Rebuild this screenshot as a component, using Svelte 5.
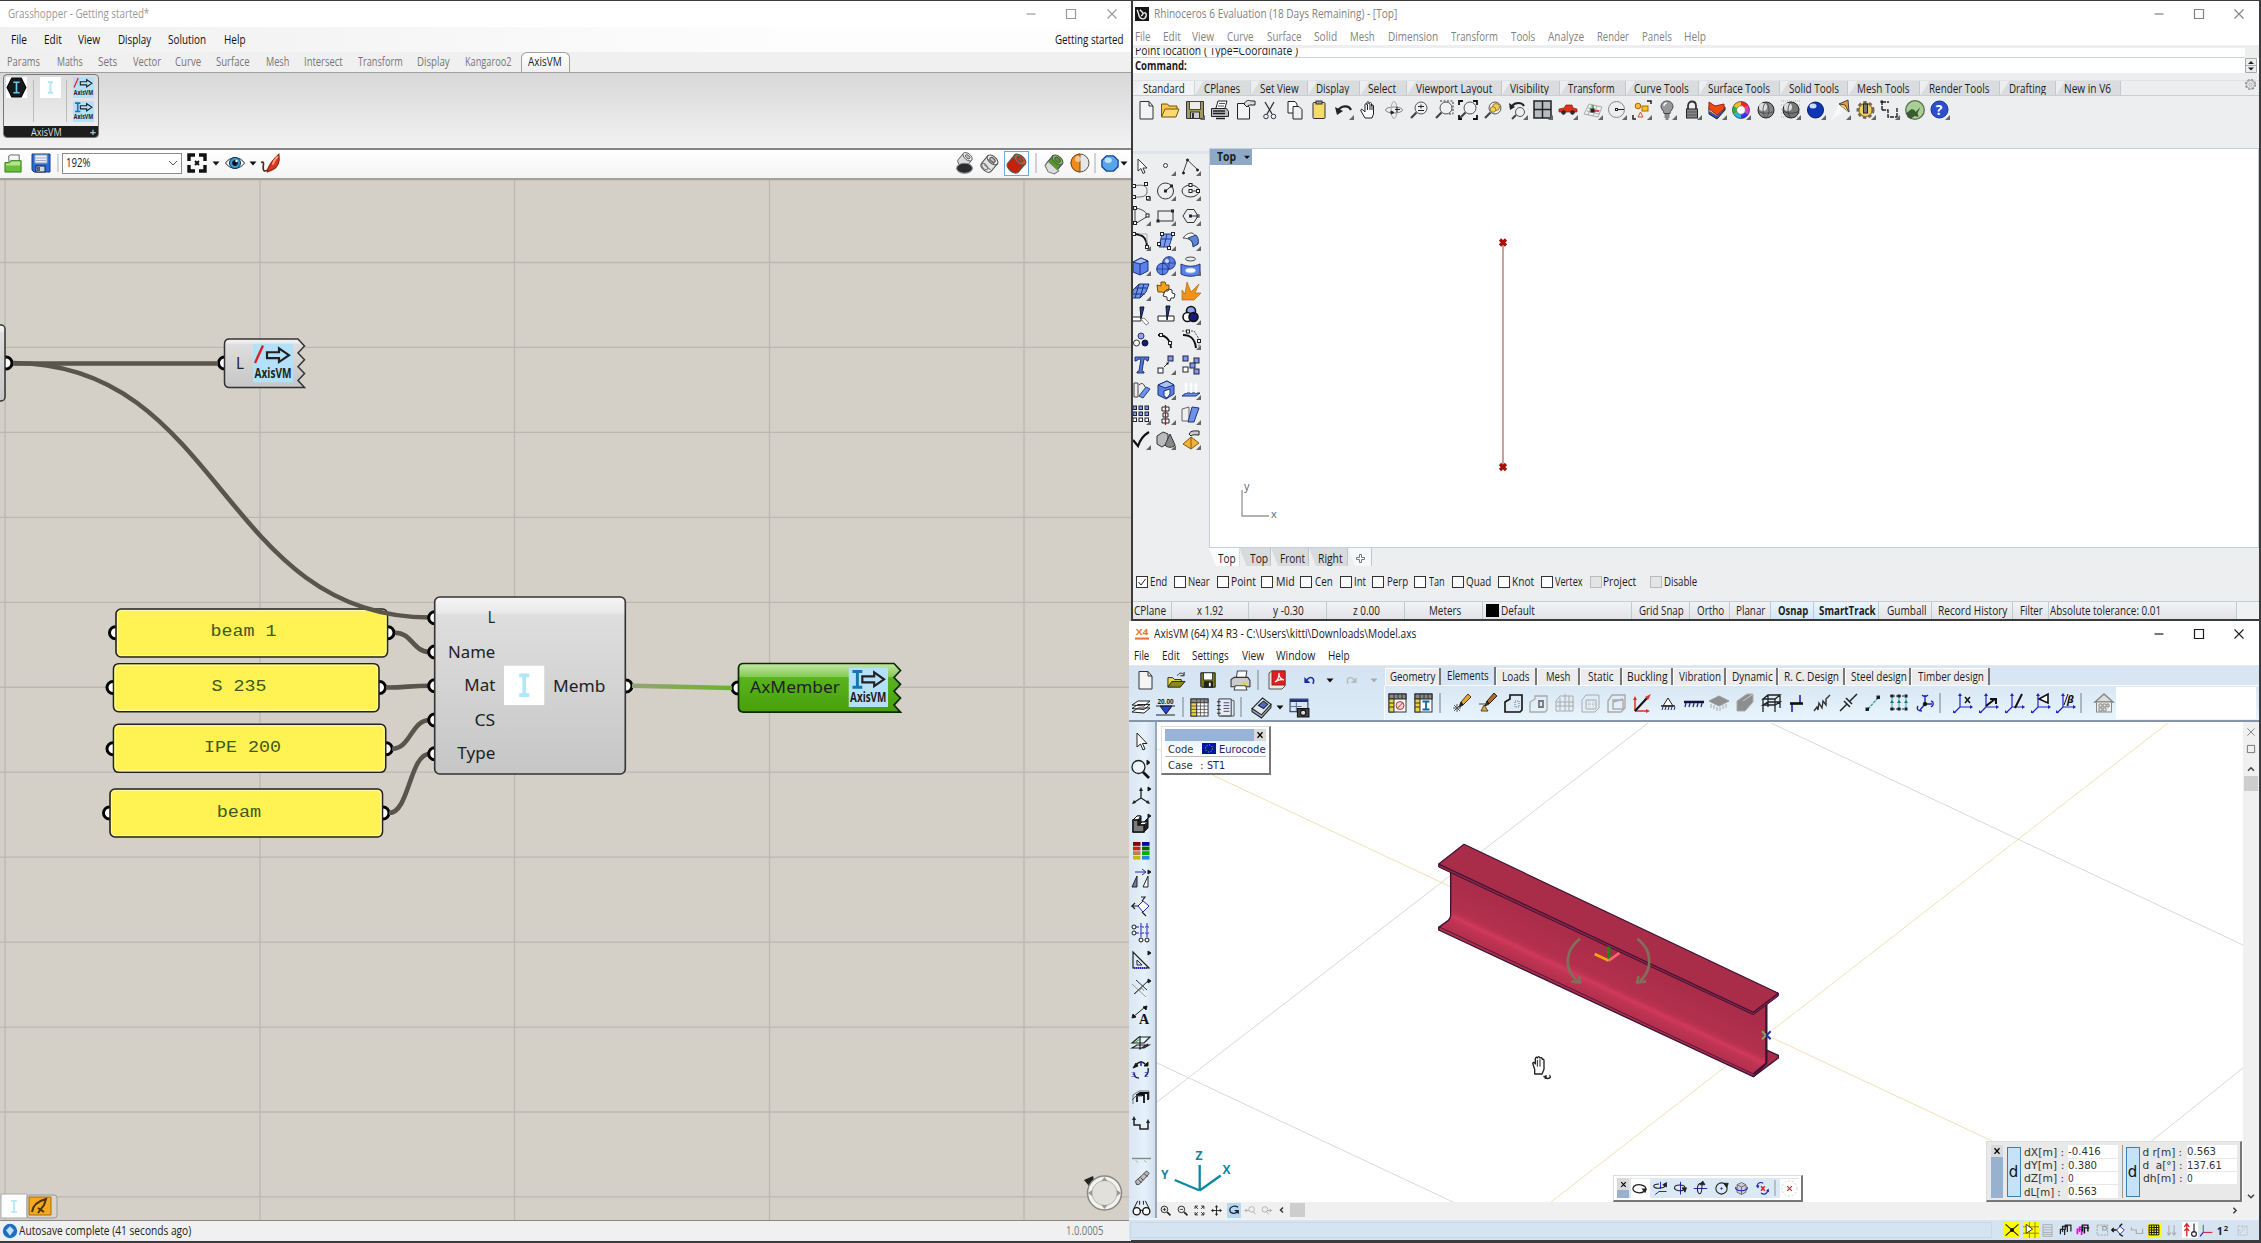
<script>
  // Squeezes a label horizontally to the width its slot reserves.
  function fit(node, w) {
    const n = node.offsetWidth;
    if (n) node.style.transform = `scaleX(${w / n})`;
  }

  // Turns absolute positions in a strip into gaps between neighbours.
  function place(items, x0) {
    let p = x0;
    return items.map(([k, v, x, w = 20, c = '']) => {
      const left = k === 'i' ? x - w / 2 : x;
      const g = left - p;
      p = left + w;
      return { k, v, w, g, c };
    });
  }

  function cellsOf(items, x0) {
    let p = x0;
    return items.map(([t, x, w, end, c = '']) => {
      const r = { t, w, pad: x - p, width: end - p, c };
      p = end;
      return r;
    });
  }

  const tri = '<path d="M20 15v5h-5z" fill="#666" stroke="none"/>';
  const mag = '<circle cx="12" cy="8" r="6" fill="#eef2f5" stroke="#555"/><path d="M7.500 12.500L2 18" stroke-width="2.200" stroke="#444"/>';
  const ucs = '<path d="M7 1v13h12M7 14l-6 6" stroke="#22c" stroke-width="1.200"/><path d="M5 3l2-3 2 3zM17 12l3 2-3 2zM0 17v3h3z" fill="#22c" stroke="none"/>';
  const cylB = (a, b) => `<g transform="rotate(40 10 10)"><path d="M4 5.500v9c0 5 12 5 12 0v-9z" fill="${a}" stroke="#555"/><ellipse cx="10" cy="5.500" rx="6" ry="3.500" fill="${b}" stroke="#555"/><ellipse cx="10" cy="5.500" rx="3" ry="1.700" fill="#0003" stroke="#555"/></g>`;
  const ax = (f) => `<rect width="20" height="20" fill="#b3e0fa" stroke="none"/>${f}<path d="M7 4.500h6V2.500l5 3.500-5 3.500v-2H7z" fill="#b3e0fa" stroke="#222" stroke-width="1.100"/><text x="0.800" y="17.600" font-size="7" textLength="18.400" lengthAdjust="spacingAndGlyphs" fill="#222" stroke="none" font-weight="bold">AxisVM</text>`;
  const ib = (c) => `<path d="M2 2h5M4.500 2v8M2 10h5" stroke="${c}" stroke-width="1.500"/>`;
  const node = (x, y) => `<rect x="${x - 1.5}" y="${y - 1.5}" width="3" height="3" fill="#fff" stroke="#222"/>`;
  const sq = (x, y, f, s = 5) => `<rect x="${x}" y="${y}" width="${s}" height="${s}" fill="${f}" stroke="#223"/>`;

  const icons = {
    sep: '<path d="M10 0v20" stroke="#9aa3ad" stroke-width="1.500"/>',
    dd: '<path d="M6.500 8.500h7L10 12.500z" fill="#111" stroke="none"/>',
    ddg: '<path d="M6.500 8.500h7L10 12.500z" fill="#aaa" stroke="none"/>',
    ddl: '<path d="M4 7.500h12L10 14z" fill="#111" stroke="none"/>',
    min: '<path d="M5.500 10h9" stroke-width="1.200"/>',
    max: '<path d="M5.500 5.500h9v9h-9z" stroke-width="1.200"/>',
    close: '<path d="M5.500 5.500l9 9M14.500 5.500l-9 9" stroke-width="1.100"/>',
    closeb: '<path d="M5 4.500l10 11M15 4.500l-10 11" stroke-width="2.400"/>',
    // Grasshopper
    hex: '<rect width="20" height="20" fill="#fff" stroke="none"/><path d="M5.500 1h9L19 10l-4.500 9h-9L1 10z" fill="#171a1c" stroke="#000"/><path d="M7 5h6M10 5v10M7 15h6" stroke="#6cc7ee" stroke-width="1.600"/>',
    ibeam: '<rect width="20" height="20" fill="#fff" stroke="none"/><path d="M7.500 5h5M10 5v10M7.500 15h5" stroke="#aee6fb" stroke-width="1.800"/>',
    axl: ax('<path d="M1 10L5 1" stroke="#d22" stroke-width="1.200"/>'),
    axi: ax(ib('#1577ad')),
    folder: '<path d="M5 8V2l2-1h9v8" fill="#f5f5f5" stroke="#666"/><path d="M1 9h4l2-2h11v12H1z" fill="#6abf3b" stroke="#2e7d1a"/><path d="M2 10h4l2-2h9v4H2z" fill="#b5e48c" stroke="none"/>',
    floppy: '<path d="M1 1h18v18H3l-2-2z" fill="#2c6bd6" stroke="#163a86"/><rect x="4" y="2" width="12" height="8" fill="#e8f0f5" stroke="#9ab"/><path d="M5 5h10M5 7.500h10" stroke="#aab"/><rect x="5" y="13" width="9" height="6" fill="#cfd6e2" stroke="#124"/><rect x="6" y="14" width="3" height="4" fill="#124a" stroke="none"/>',
    focus: '<path d="M2 8V2h6M12 2h6v6M18 12v6h-6M8 18H2v-6" stroke="#111" stroke-width="3.400"/><path d="M8 8l4 4M12 8l-4 4" stroke="#111" stroke-width="2"/>',
    eye: '<path d="M0.500 10C5 3 15 3 19.500 10 15 17 5 17 0.500 10z" fill="#fff" stroke="#223"/><circle cx="10" cy="10" r="5.500" fill="#3a9ddb" stroke="#135"/><circle cx="10" cy="10" r="2.500" fill="#012"/><circle cx="11.500" cy="8" r="1.200" fill="#fff" stroke="none"/>',
    brush: '<path d="M1 9c5-2 0 6 3 8 3 1 4-2 6-3" stroke="#5a2a1a" stroke-width="1.600"/><path d="M7 18c0-4 5-12 11-17 1 6 0 12-6 15z" fill="#d9381e" stroke="#8a2210"/><path d="M12 11c1-3 3-6 5-8" stroke="#ff9a7a" stroke-width="2"/>',
    dome: '<g transform="translate(2,-2) scale(.85)">' + cylB('#ddd', '#f5f5f5') + '</g><ellipse cx="10" cy="14.500" rx="7.500" ry="4.800" fill="#2a2d2f" stroke="#888"/>',
    wirec: cylB('#e4e4e4', '#f2f2f2') + '<path d="M5 11l6 5M9 6l6 5" stroke="#777"/><ellipse cx="5.500" cy="13" rx="2" ry="3.500" transform="rotate(-40 5.500 13)" stroke="#777"/>',
    redc: cylB('#c8200a', '#e64a2a'),
    greenc: cylB('#4f9e1c', '#74c43c') + '<path d="M1 12l3-4 10 9-4 3-6-2z" fill="#ddd" stroke="#777"/>',
    half: '<circle cx="10" cy="10" r="9" fill="#e6e6e6" stroke="#555"/><path d="M10 1a9 9 0 0 0 0 18z" fill="#ee8b1c" stroke="#874a06"/><ellipse cx="8" cy="6" rx="3" ry="3" fill="#fff8" stroke="none"/>',
    gem: '<path d="M6 2h8l5 5v7l-5 5H6l-5-5V7z" fill="#5aa5ea" stroke="#174a99" stroke-width="1.500"/><ellipse cx="8" cy="7" rx="4" ry="3" fill="#bfe0ff" stroke="none"/>',
    // Rhino toolbar
    rlogo: '<rect width="20" height="20" fill="#151515" stroke="none"/><path d="M3 4c3 5 1 8 5 12 3 2 8 1 8-4M7 4l5 5-3 4M13 8c4 0 4 6 1 7" stroke="#eee" stroke-width="2"/>',
    new: '<path d="M4 1.500h9l4 4.500v13H4z" fill="#f4f4f4" stroke="#333"/><path d="M13 1.500V6h4" stroke="#333"/>',
    open: '<path d="M1.500 17V4h6l1.500 2h8v3" fill="#f5c64f" stroke="#7a5200"/><path d="M1.500 17L5 9h14l-3 8z" fill="#ffd873" stroke="#7a5200"/>',
    rsave: '<path d="M1.500 1.500h17v17h-17z" fill="#a29b57" stroke="#333"/><rect x="4.500" y="1.500" width="11" height="8" fill="#eee" stroke="#444"/><rect x="5.500" y="12" width="9" height="6.500" fill="#ccc" stroke="#333"/><path d="M8 13v5" stroke="#333" stroke-width="2"/>' + tri,
    print: '<path d="M6 8l2-7h9l-2 7" fill="#fff" stroke="#222"/><path d="M1.500 8.500h15l2 3v5h-17z" fill="#bbb" stroke="#222"/><path d="M3 11h12M3 13.500h12M6 18.500h9" stroke="#222" stroke-width="1.400"/><path d="M9 3.500h6M8 6h6" stroke="#555"/>',
    props: '<path d="M2.500 3.500h8l4 4v11.500h-12z" fill="#f4f4f4" stroke="#222"/><path d="M9 4c2-4 5-4 7-3h4v4h-3c-3 0-4 0-5 2z" fill="#ddd" stroke="#222"/>',
    cut: '<path d="M5 2l7 12M14 2L7 14" stroke="#333" stroke-width="1.300"/><circle cx="6" cy="16.500" r="2.300" stroke="#335"/><circle cx="13.500" cy="16.500" r="2.300" stroke="#335"/>',
    copy: '<path d="M3 1.500h7l2 2.500v9H3z" fill="#fff" stroke="#222"/><path d="M8 6.500h6l3 3V19H8z" fill="#f1f1f1" stroke="#222"/>',
    paste: '<rect x="4" y="2.500" width="12" height="16" rx="1" fill="#f5dc6a" stroke="#333"/><rect x="7" y="1" width="6" height="3" fill="#999" stroke="#333"/>',
    undo: '<path d="M4 11c3-6 11-6 13-1" stroke="#222" stroke-width="2.200"/><path d="M1 7l2 8 6-4z" fill="#222" stroke="none"/>' + tri,
    hand: '<path d="M6 18l-4-7c-1-2 1-2 2-1l2 2V5c0-2 2-2 2 0V3c0-2 2-2 2 0v1c0-2 2.500-2 2.500 0v2c0-1.500 2-1.500 2 0v8l-1.500 4z" fill="#fff" stroke="#222"/><path d="M8.500 5v5M11 4v6M13 5v5" stroke="#222"/>',
    rot: '<ellipse cx="10" cy="10" rx="8.500" ry="3" stroke="#888"/><ellipse cx="10" cy="10" rx="3" ry="8.500" stroke="#aaa"/><path d="M7 11l3 1.500-3 1.500z" fill="#222" stroke="#222"/><path d="M13 6.500v6M11 9.500h5" stroke="#222"/>',
    zoom: mag + '<path d="M9 6.500h6M12 4.500v4M9 10.500h6" stroke="#222"/>',
    zwin: mag + '<path d="M6 1h13v13h-5" stroke="#333" stroke-dasharray="2 1.500"/>',
    zext: mag + '<path d="M1 5V1h4M15 1h4v4M19 15v4h-4M1 15v4h3" stroke="#111" stroke-width="1.800"/>',
    zsel: mag + '<circle cx="13" cy="7" r="3.500" fill="#f6d13c" stroke="#975"/><circle cx="10" cy="9.500" r="2.800" fill="#f6d13c" stroke="#975"/>',
    zundo: '<circle cx="12" cy="12" r="4.500" stroke="#555"/><path d="M8 15l-4 4" stroke-width="2" stroke="#444"/><path d="M4 6c3-4 10-4 12 0" stroke="#222" stroke-width="2"/><path d="M1 3l1 7 5-3z" fill="#222" stroke="none"/>' + tri,
    view4: '<path d="M1 1h17v17H1zM9.500 1v17M1 9.500h17" fill="#b8bcc0" stroke="#222" stroke-width="1.500"/>' + tri,
    car: '<path d="M1 12v-3l5-1 2-3h6l1 3 4 1v3z" fill="#e03018" stroke="#8a1a0c" stroke-width=".7"/><circle cx="5.500" cy="12.500" r="1.800" fill="#333"/><circle cx="14.500" cy="12.500" r="1.800" fill="#333"/>' + tri,
    cpl: '<path d="M1 14L6 4l13 3-4 10zM4 11l12 3M5 8l12 3M9 5l-4 10M14 6l-4 10" stroke="#aaa"/><path d="M10 11V5" stroke="#2a2" stroke-width="1.500"/><path d="M10 11h6" stroke="#d22" stroke-width="1.500"/>' + sq(8, 9, '#222', 3) + tri,
    circ: '<circle cx="9.500" cy="9.500" r="8" stroke="#888"/><path d="M10 9.500h7" stroke="#222"/>' + sq(8.500, 8.500, '#fff', 2) + tri,
    objs: '<path d="M1 15v4h3M15 1h4v3" stroke="#222" stroke-width="1.500"/><circle cx="6" cy="6" r="2.800" fill="#fb3" stroke="#a60"/><rect x="10" y="6" width="6" height="5" fill="#ffc11a" stroke="#a60"/><path d="M6 17l2.500-5 2.500 5z" stroke="#c52"/>' + tri,
    bulb: '<path d="M10 1c4 0 6 3 6 5.500 0 3-3 4-3 7H7c0-3-3-4-3-7C4 4 6 1 10 1z" fill="#999" stroke="#444"/><path d="M7.500 15h5M7.500 17h5M8.500 19h3" stroke="#222"/><path d="M7 6c0-2 1-3 3-3" stroke="#eee" stroke-width="1.500"/>' + tri,
    lock: '<path d="M6 9V6c0-6 8-6 8 0v3" stroke="#333" stroke-width="1.800"/><rect x="4.500" y="9" width="11" height="9" fill="#888" stroke="#222"/><path d="M5 12h10M5 15h10" stroke="#555"/>' + tri,
    layers: '<path d="M2 8v6l8 5 8-9V7z" fill="#2b4fc0" stroke="#222"/><path d="M2 6v5l8 5 8-9z" fill="#fff" stroke="#666"/><path d="M2 2l6 4 9-2v5l-7 6-8-6z" fill="#ee4a10" stroke="#922"/>' + tri,
    color: '<g stroke-width="4"><path d="M10 3.500a6.500 6.500 0 0 1 5.600 3.200" stroke="#f22"/><path d="M15.600 6.700a6.500 6.500 0 0 1 0 6.600" stroke="#d3c"/><path d="M15.600 13.300A6.500 6.500 0 0 1 10 16.500" stroke="#33f"/><path d="M10 16.500a6.500 6.500 0 0 1-5.600-3.200" stroke="#2bd"/><path d="M4.400 13.300a6.500 6.500 0 0 1 0-6.600" stroke="#2b3"/><path d="M4.400 6.700A6.500 6.500 0 0 1 10 3.500" stroke="#fb2"/></g><circle cx="10" cy="10" r="8.500" stroke="#333" stroke-width=".7"/><circle cx="10" cy="10" r="4.300" fill="#fff" stroke="#555" stroke-width=".7"/>' + tri,
    ball: '<circle cx="10" cy="10" r="8" fill="#888" stroke="#222"/><circle cx="7" cy="7" r="4" fill="#ddd" stroke="none"/><path d="M10 2c-4 4-4 12 0 16M2 11c5 3 11 3 16 0M10 2c4 4 4 12 0 16" stroke="#444" stroke-width=".8"/>',
    ball2: '<path d="M0 1h20M0 5h20M0 9h20M0 13h20M0 17h20" stroke="#aaa" stroke-dasharray="1 1"/><circle cx="10" cy="10" r="8" fill="#777" stroke="#222"/><circle cx="7" cy="7" r="4" fill="#ddd" stroke="none"/><path d="M10 2c-4 4-4 12 0 16M2 11c5 3 11 3 16 0" stroke="#333" stroke-width=".8"/>' + tri,
    blue: '<circle cx="9.500" cy="10" r="8" fill="#0c37b5" stroke="#061c66"/><ellipse cx="7" cy="6" rx="3.500" ry="2.500" fill="#cfdcff" stroke="none"/>' + tri,
    spot: '<path d="M8 4l9-4 1 12z" fill="#f09a20" stroke="#444"/><path d="M8 4l6 1 4 7" fill="#ffd27a" stroke="#444"/><path d="M0 20L8 5l6 6z" fill="#fff9" stroke="none"/>' + tri,
    gear: '<circle cx="9.500" cy="10" r="7.500" fill="#e6b53a" stroke="#765" stroke-width="3" stroke-dasharray="3.200 2.300"/><circle cx="9.500" cy="10" r="6.500" fill="#f2cf5b" stroke="#765"/><rect x="7.500" y="4" width="4" height="9" fill="#777" stroke="#222"/>' + tri,
    dim: '<path d="M2 2h7M2 1v9M2 10h6v7h9M17 8v9M10 17h7" stroke="#222" stroke-width="1.400" stroke-dasharray="4 1"/>' + sq(1, 1, '#222', 1.500) + tri,
    rh: '<circle cx="10" cy="10" r="9.300" fill="#a9cf95" stroke="#5a6e52" stroke-width="1.300"/><path d="M1.500 13l5-4 3 1 1 2 5-5-3 6 1 4-4-1-4 3-3-2z" fill="#3a5a34" stroke="none"/>',
    help: '<circle cx="9.500" cy="9.500" r="8.500" fill="#2b50cf" stroke="#14308c"/><text x="5.800" y="14.500" font-size="14" font-weight="bold" fill="#fff" stroke="none">?</text>' + tri,
    cog: '<circle cx="10" cy="10" r="7.500" stroke="#888" stroke-width="2" stroke-dasharray="3.500 2.400"/><circle cx="10" cy="10" r="6" stroke="#888"/><circle cx="10" cy="10" r="2.500" stroke="#888"/>',
    // Rhino side palette
    arrow: '<path d="M7 3v12l3-2.500 2 5 2-1-2-4.500h4z" fill="#fff" stroke="#333"/>',
    point: '<circle cx="9.500" cy="9.500" r="2" fill="#fff" stroke="#333"/>' + tri,
    poly: '<path d="M2 17L6.500 4 17 14" stroke="#444"/><circle cx="2.500" cy="17" r="1" fill="#222"/><circle cx="6.500" cy="4" r="1" fill="#222"/><circle cx="16.500" cy="14" r="1" fill="#222"/>' + tri,
    cv: '<path d="M2 5c15-3 14 3 14 6 0 6-9 5-14 5" stroke="#666"/>' + node(3, 5) + node(15, 3) + node(3, 16) + node(17, 17) + tri,
    circle: '<circle cx="9.500" cy="10" r="8" stroke="#333"/><path d="M9.500 10l6-5" stroke="#333"/>' + sq(8.500, 9, '#222', 2) + sq(14.500, 4, '#fff', 2) + tri,
    ell: '<ellipse cx="9.500" cy="10" rx="8.500" ry="6" stroke="#333"/>' + node(9.500, 4) + node(9.500, 10) + node(17, 10) + '<path d="M11 10h5" stroke="#333"/>' + tri,
    arc: '<path d="M4 18V2c8 1 12 5 13 8z" stroke="#444"/>' + node(4, 2) + node(4, 17) + node(16.500, 9.500) + tri,
    rect: '<rect x="2" y="5" width="15" height="10" stroke="#333"/>' + sq(15.500, 4, '#fff', 2) + sq(1, 14, '#222', 2) + tri,
    polyg: '<path d="M6 3.500h7l4 6.500-4 6.500H6L2 10z" stroke="#333"/><path d="M9.500 10h7" stroke="#333"/>' + sq(8.500, 9, '#222', 2) + sq(16, 9, '#fff', 2) + tri,
    fillet: '<path d="M2 3c9 0 14 3 14 14" stroke="#111" stroke-width="2"/><path d="M8 3h8v9" stroke="#aaa"/>' + node(3, 3) + node(16, 16) + tri,
    surf: '<path d="M6 3h11l-4 13H3z" fill="#7e9df0" stroke="#223a8c"/><path d="M5 8h11M11 3L8 16" stroke="#223a8c"/>' + node(6, 3) + node(17, 3) + node(3, 13) + node(13, 17) + tri,
    loft: '<path d="M2 7c3-4 6-5 9-5 4 2 6 6 6 11l-5 2c0-5-4-8-10-8z" fill="#fff" stroke="#444"/><path d="M7 7l8-3c2 2 3 5 2 9l-5 3c0-4-1-7-5-9z" fill="#5f84e0" stroke="#246"/>' + tri,
    box: '<path d="M2 6l8-4 7 3v10l-8 4-7-3z" fill="#5b80ea" stroke="#1c3476"/><path d="M2 6l7 2 8-3-7-3z" fill="#a9c0fb" stroke="#1c3476"/><path d="M9 8v11" stroke="#1c3476"/>' + tri,
    boolu: '<circle cx="13" cy="7" r="6.300" fill="#5b80ea" stroke="#1c3476"/><circle cx="6.500" cy="13" r="5.800" fill="#5b80ea" stroke="#1c3476"/><path d="M13 1v12M7 7h12M6.500 7v12M1 13h11" stroke="#1c3476" stroke-width=".7"/><circle cx="11" cy="5" r="2" fill="#cfdcff" stroke="none"/>' + tri,
    proj: '<ellipse cx="9.500" cy="3" rx="5" ry="2" stroke="#444"/><path d="M0 8c6 3 13 3 19 0v10c-6 3-13 3-19 0z" fill="#5b80ea" stroke="#1c3476"/><ellipse cx="9.500" cy="14.500" rx="5" ry="2.500" fill="#fff" stroke="#9bf"/>' + tri,
    mesh: '<path d="M2 9l6-6 10 0-3 8-6 6-8 0z" fill="#6f92ee" stroke="#1c3476"/><path d="M4 7h12M1 13h13M8 3L4 17M13 3L9 17" stroke="#1c3476"/>' + tri,
    puzzle: '<path d="M1 4l4 1 0-4 4 0 1 3 3 0v4l-3 1-1 3-3-1-4 0z" fill="#f2a31b" stroke="#7a4c00"/><path d="M9 10l3 0 1-2 3 1 0 3 3 1-1 4-3 0-1 3-3-1 0-3-4-1z" fill="#fff" stroke="#333"/>',
    explode: '<path d="M1 19V9l3 4L6 1l4 10 8-8-4 9 6 0-7 7z" fill="#f09318" stroke="#a35a00" stroke-width=".6"/>',
    trim: '<path d="M1 12h9v4H1z" fill="#fff" stroke="#222"/><path d="M9 2h4l-3 12z" fill="#1e3f9e" stroke="#112"/><path d="M10 14l3-1 5 5-3 2z" fill="#fff" stroke="#888"/>',
    split: '<path d="M2 11h16v5H2z" fill="#fff" stroke="#222"/><path d="M10 1h4l-3 14z" fill="#1e3f9e" stroke="#112"/>',
    group: '<circle cx="10" cy="6" r="4.500" fill="#8ea2ee" stroke="#111" stroke-width="1.600"/><circle cx="6.500" cy="12" r="4.500" fill="#fff" stroke="#111" stroke-width="1.600"/><circle cx="12.500" cy="12" r="4.500" fill="#131c7a" stroke="#111" stroke-width="1.600"/>' + tri,
    ungroup: '<circle cx="10" cy="6" r="3" fill="#8ea2ee" stroke="#336"/><circle cx="5.500" cy="13" r="3" fill="#fff" stroke="#333"/><circle cx="14" cy="13" r="3" fill="#131c7a" stroke="#113"/>',
    edp: '<path d="M2 5c8 0 12 4 13 13" stroke="#111" stroke-width="1.800"/>' + node(5, 5) + node(14, 13),
    edc: '<path d="M2 5c9 0 12 5 13 13" stroke="#111" stroke-width="2"/><path d="M1 1h12l5 8v8" stroke="#555" stroke-dasharray="2 1"/>' + node(7, 1.500) + node(18, 11) + tri,
    text: '<path d="M4 2h14l-1 4h-1l-1-2h-2L11 16l2 1v1H6v-1l2-1 2-12H8L5 6H4z" fill="#5878d8" stroke="#1c3476"/>',
    scale: sq(12, 1, '#7d9bf2') + sq(2, 13, '#fff') + '<path d="M8 12l4-4" stroke="#333"/><path d="M13 7l-1 3-2-2z" fill="#111" stroke="none"/>' + tri,
    align: sq(2, 1, '#7d9bf2') + sq(13, 3, '#7d9bf2') + sq(9, 8, '#7d9bf2') + sq(2, 12, '#fff') + sq(13, 14, '#7d9bf2'),
    copyr: '<path d="M3 3h4v14H3z" stroke="#444"/><path d="M8 5c3-3 5-1 6 2" stroke="#444"/><path d="M8 16L15 7l4 2-7 9z" fill="#6f92ee" stroke="#246"/>',
    solid: '<path d="M2 5l9-4 7 4v9l-8 5-8-4z" fill="#5b80ea" stroke="#1c3476"/><path d="M2 5l7 3 9-3-7-4z" fill="#a9c0fb" stroke="#1c3476"/><path d="M8 11l6-2v5l-3 4-3-2z" fill="#fff" stroke="#1c3476"/>' + tri,
    ext: '<path d="M1 16h14l4-3H5z" fill="#6f92ee" stroke="#1c3476"/><path d="M5 13V5M10 13V5M15 13V5" stroke="#fff" stroke-width="1.600"/><path d="M3 6l2-4 2 4zM8 6l2-4 2 4zM13 6l2-4 2 4z" fill="#fff" stroke="none"/>' + tri,
    array: [1, 7, 13].map((y) => [2, 8, 14].map((x) => sq(x, y, y < 12 ? '#7d9bf2' : '#fff', 3.500)).join('')).join('') + tri,
    hist: '<path d="M6 2h7v4H6zM7 8h5v4H7zM6 14h7v4H6z" fill="#fff" stroke="#222"/><path d="M9.500 0v20" stroke="#b11" stroke-width="1.300"/>' + tri,
    shear: '<path d="M1 4l7-2v14H1z" stroke="#666" fill="#eee"/><path d="M11 2l7 1-5 14-6 0z" fill="#6f92ee" stroke="#1c3476"/>' + tri,
    check: '<path d="M2 10l5 6C9 10 13 5 18 2" stroke="#111" stroke-width="2.200"/>' + tri,
    rend: '<path d="M1 6l6-4 5 2v9l-6 4-5-3z" fill="#bbb" stroke="#333"/><path d="M14 4l5 11c-2 3-8 3-10 0z" fill="#888" stroke="#333"/>' + tri,
    pyr: '<path d="M2 14l8-7 8 6-8 6z" fill="#f1b13c" stroke="#8a5a00"/><path d="M10 7v12" stroke="#8a5a00"/><path d="M8 4c2-4 6-3 10-3v4c-3 0-6-1-8 1z" fill="#ccc" stroke="#222"/>' + tri,
    // AxisVM
    x4: '<text x="1" y="11.500" font-size="13" font-weight="bold" textLength="18" lengthAdjust="spacingAndGlyphs" fill="#e8772e" stroke="none">X4</text><path d="M0 15h20v3H0z" fill="#e8772e" stroke="none"/>',
    aopen: '<path d="M1 17V7h5l2 2h7v3" fill="#f0e040" stroke="#222"/><path d="M1 17l4-6h14l-5 6z" fill="#8a8a18" stroke="#222"/><path d="M11 5c2-4 5-3 7-1M18 1v4h-4" stroke="#222"/>',
    asave: '<path d="M2 2h16v16H3l-1-1z" fill="#7a7a1c" stroke="#111"/><rect x="5" y="2" width="10" height="8" fill="#fff" stroke="#333"/><rect x="6" y="12" width="9" height="6" fill="#222"/><rect x="11" y="13" width="2" height="4" fill="#fff" stroke="none"/>',
    aprint: '<path d="M6 8l1-7h9l-1 7" fill="#fff" stroke="#444"/><path d="M1 9l3-2h13l2 3v6H1z" fill="#ccc" stroke="#333"/><rect x="11" y="12" width="6" height="2" fill="#e8d43c" stroke="none"/><path d="M5 15h10l1 4H4z" fill="#fff" stroke="#444"/>',
    pdf: '<path d="M2 3l3-2h13v15l-3 3H2z" fill="#e9e9e9" stroke="#555"/><rect x="5" y="1" width="13" height="14" fill="#e02020" stroke="#922"/><path d="M8 12c4-2 4-6 4-9 0 5 2 6 5 7-3-1-6 0-9 2z" stroke="#fff" stroke-width="1.200"/>',
    aundo: '<path d="M7 9c4-5 10-2 7 5" stroke="#1b2a9a" stroke-width="1.800"/><path d="M4 6v7h7z" fill="#1b2a9a" stroke="none"/>',
    aredo: '<path d="M13 9c-4-5-10-2-7 5" stroke="#b4bcc4" stroke-width="1.800"/><path d="M16 6v7H9z" fill="#b4bcc4" stroke="none"/>',
    stack: '<path d="M1 15l6-4h12l-6 5zM1 11.500l6-4h12l-6 5zM1 8l6-4h12l-6 5z" fill="#fff" stroke="#222"/>',
    lvl: '<text x="1.500" y="7" font-size="7" textLength="16" lengthAdjust="spacingAndGlyphs" font-weight="bold" fill="#222" stroke="none">20.00</text><path d="M4 9h12l-6 8z" fill="#2244dd" stroke="#113"/><path d="M0 18h19M0 9h19" stroke="#222"/>',
    table: '<rect x="1" y="1" width="18" height="18" fill="#fff" stroke="#333"/><rect x="1" y="1" width="18" height="4" fill="#888" stroke="#333"/><rect x="1" y="5" width="6" height="14" fill="#e8d43c" stroke="#333"/><path d="M7 1v18M11 1v18M15 1v18M1 8.500h18M1 12h18M1 15.500h18" stroke="#444" stroke-width=".8"/>',
    book: '<path d="M3 1h13v18H3z" fill="#e4edf4" stroke="#333"/><path d="M16 2l3 1v16H5" stroke="#555"/><path d="M8 5h6M8 8h6M8 11h6M8 14h6" stroke="#446"/><path d="M1 4h4M1 8h4M1 12h4M1 16h4" stroke="#222"/>',
    disk3: '<path d="M1 11v3l9 6 9-10V7l-8 5z" fill="#9ab" stroke="#222"/><path d="M1 11L11 1l8 6-9 10z" fill="#dfe6ee" stroke="#222"/><path d="M7 8l5-4 4 3-4 4z" fill="#4a6cc0" stroke="#223"/>',
    wcam: '<rect x="1" y="2" width="17" height="12" fill="#dbe5f2" stroke="#1e3070"/><path d="M1 3.500h17" stroke="#1e3070" stroke-width="2.500"/><path d="M7 5v8M2 9h10" stroke="#579"/><rect x="8" y="11" width="11" height="8" fill="#444" stroke="#111"/><circle cx="13.500" cy="15" r="2.500" fill="#ddd" stroke="#111"/>',
    tno: '<rect x="1" y="1" width="17" height="18" fill="#fff" stroke="#333"/><rect x="1" y="1" width="17" height="5" fill="#888"/><rect x="1" y="6" width="5" height="13" fill="#e8d43c" stroke="#333"/><path d="M1 10h5M1 14h5M6 1v5M10 1v5M14 1v5" stroke="#333"/><circle cx="12" cy="12.500" r="4" fill="#f3d3d3" stroke="#a33"/><path d="M9.500 15l5-5" stroke="#a33"/>',
    tib: '<rect x="1" y="1" width="17" height="18" fill="#fff" stroke="#333"/><rect x="1" y="1" width="17" height="5" fill="#888"/><rect x="1" y="6" width="5" height="13" fill="#e8d43c" stroke="#333"/><path d="M1 10h5M1 14h5M6 1v5M10 1v5M14 1v5" stroke="#333"/><path d="M8.500 8.500h7M12 8.500v8M8.500 16.500h7" stroke="#16a" stroke-width="1.800"/>',
    pen1: '<path d="M9 9l7-8 3 3-8 8z" fill="#e2a92f" stroke="#532"/><path d="M9 9l-2 5 4-2z" fill="#222"/><path d="M5 11v8M1 15h8M2 12l6 6M8 12l-6 6" stroke="#555"/>',
    pen2: '<path d="M9 8l7-8 3 3-8 8z" fill="#b06a24" stroke="#321"/><path d="M9 8l-2 5 4-2z" fill="#222"/><path d="M1 11h9M6 12l4 6H3z" fill="#e2a92f" stroke="#543"/>',
    dom: '<path d="M6 2h12v15l-2 2H1V9l5-3z" fill="#dfeaf4" stroke="#111" stroke-width="1.600"/><path d="M11 8h4v6h-4z" stroke="#678" stroke-dasharray="1 1"/>',
    domh: '<path d="M6 3h12v14l-2 2H1V9l5-3z" stroke="#aaa" stroke-width="1.300"/><path d="M10 8h4v6h-4z" stroke="#777" stroke-width="1.800"/>',
    domg: '<path d="M5 3h13v15H1V8zM10 1v17M1 9h18M5 5v12M1 13h18M14 3v15" stroke="#aaa"/>',
    domk: '<path d="M5 2h13v13l-4 4H1V7zM5 7h10v9H5z" stroke="#aaa"/><path d="M8 7v9M12 7v9M5 11h10" stroke="#bbb" stroke-dasharray="1 1"/>',
    domj: '<path d="M5 2h13v13l-4 4H1V8zM6 7h10v9H6zM6 9l10-3" stroke="#aaa" stroke-width="1.400"/>',
    axr: '<path d="M3 18V5M3 18h13" stroke="#e03020" stroke-width="1.500"/><path d="M1 7l2-4 2 4zM14 16l4 2-4 2z" fill="#e03020" stroke="none"/><path d="M3 18L15 5" stroke="#111" stroke-width="2"/><path d="M13 4l6-3-3 6z" fill="#e03020" stroke="none"/>',
    supp: '<path d="M10 5l5 8H5z" stroke="#222" fill="#fff"/><path d="M3 13h14" stroke="#223" stroke-width="1.500"/><path d="M5 14l-1 3M8 14l-1 3M11 14l-1 3M14 14l-1 3M17 14l-1 3" stroke="#22a"/>',
    lsup: '<path d="M0 9h20" stroke="#113" stroke-width="2.500"/><path d="M2 10l-1 4M6 10l-1 4M10 10l-1 4M14 10l-1 4M18 10l-1 4" stroke="#22a" stroke-width="1.300"/>',
    slab: '<path d="M0 8l10-5 10 5-10 5z" fill="#8f8f8f" stroke="#999"/><path d="M2 11v4M5 12v4M8 14v4M11 14v4M14 12v4M17 11v4" stroke="#aaa"/>',
    wall: '<path d="M2 8L12 1h6v8l-8 9H2z" fill="#8e8e8e" stroke="#aaa"/><path d="M8 8l10-7" stroke="#ccc"/>',
    frame: '<path d="M2 6l5-4h12l-5 4zM2 6v13M14 6v13M7 2v12M19 2v13M2 12l5-3h12l-5 3z" stroke="#222" stroke-width="1.300"/>',
    link: '<path d="M6 19v-8M14 2v8" stroke="#22a" stroke-width="1.600"/><path d="M4 10.500h13" stroke="#111" stroke-width="2.600"/>',
    spring: '<path d="M2 18l3-4 1 3 1-7 3 5 1-7 3 4 0-6 4-4" stroke="#333" stroke-width="1.400"/>',
    gap: '<path d="M2 18l7-7M11 9l8-8M6 8l6 6M8 5l6 6" stroke="#222" stroke-width="1.500"/>',
    rigid: '<path d="M5 16L15 5" stroke="#3aa" stroke-width="1.500" stroke-dasharray="3 1"/>' + sq(3, 15, '#111', 2.500) + sq(14, 3, '#111', 2.500),
    nodes3: '<path d="M1 3h18M1 16h18" stroke="#222" stroke-dasharray="2 1"/><path d="M3 4v11M10 4v11M17 4v11" stroke="#3aa"/><path d="M1 10l2-3 2 3zM8 10l2-3 2 3zM15 10l2-3 2 3z" fill="#177" stroke="none"/>' + sq(2, 2, '#111', 2) + sq(9, 2, '#111', 2) + sq(16, 2, '#111', 2) + sq(2, 15, '#111', 2) + sq(9, 15, '#111', 2) + sq(16, 15, '#111', 2),
    rotn: '<path d="M10 10V2M10 11l-5 6M11 11h6M16 8c3 1 3 4 0 6M3 13c-2 3 0 5 4 5M7 2c2 2 4 2 6 0" stroke="#22b" stroke-width="1.400"/><circle cx="10" cy="11" r="1.800" fill="#111"/>',
    ux: ucs + '<path d="M12 4l5 6M17 4l-5 6" stroke="#111" stroke-width="1.500"/>',
    ua: ucs + '<path d="M7 13l9-7M11 6h6v5" stroke="#111" stroke-width="2"/>',
    ul: ucs + '<path d="M10 15l7-14" stroke="#111" stroke-width="2"/>',
    ut: ucs + '<path d="M8 6l9-5v9z" fill="#fff" stroke="#111" stroke-width="1.600"/>',
    ub: ucs + '<text x="11" y="10" font-size="11" font-style="italic" font-weight="bold" fill="#111" stroke="none">β</text><path d="M8 12L12 1" stroke="#111"/>',
    house: '<path d="M1 9l9-8 9 8z" fill="#ddd" stroke="#888" stroke-width="1.500"/><rect x="2.500" y="9" width="15" height="10" fill="#eee" stroke="#888"/><path d="M5 11h3v3H5zM9 11h3v3H9zM13 11h2v3h-2zM5 15h3v3H5zM9 15h3v3H9z" stroke="#888"/>',
    sarrow: '<path d="M6 1v14l3.500-3 2.500 6 2-1-2.500-5.500H16z" fill="#fff" stroke="#222"/>',
    szoom: '<circle cx="7.500" cy="8" r="6.500" fill="#eef5fa" stroke="#222" stroke-width="1.300"/><path d="M12 13l6 6" stroke="#111" stroke-width="2.600"/><path d="M16 1l3 2.500L16 6z" fill="#111"/>',
    saxes: '<path d="M10 12V3M10 12l-8 5M10 12l8 5" stroke="#222" stroke-width="1.300"/><path d="M8 5l2-4 2 4zM1 18l2-4 2 3zM19 18l-4-1 2-3z" fill="#222" stroke="none"/><path d="M17 1l3 2-3 2z" fill="#111"/>',
    scube: '<path d="M2 6l4-4h4v6h3l4-4v10l-4 4H2z" fill="#222" stroke="#111"/><path d="M2 6l4-4h4l-3 4zM8 11l3-3h6l-4 3z" fill="#fff" stroke="#111"/><path d="M2 6h5v5h6v7H2z" fill="#7b7b7b" stroke="#111" stroke-width="1.400"/><path d="M17 0l3 2-3 2z" fill="#111"/>',
    spal: ['#800', '#c21', '#b8804c', '#c8b814'].map((c, i) => `<rect x="2" y="${1 + i * 4.6}" width="7.500" height="3.800" fill="${c}" stroke="none"/>`).join('') + ['#00a', '#060', '#0a0', '#28e'].map((c, i) => `<rect x="11" y="${1 + i * 4.6}" width="7.500" height="3.800" fill="${c}" stroke="none"/>`).join(''),
    smir: '<path d="M4 4h10M11 1l4 3-4 3" stroke="#22b"/><path d="M1 19h5V8z" fill="#6a7fa8" stroke="#222"/><path d="M12 19h5V8z" fill="#fff" stroke="#222"/><path d="M17 2l3 2-3 2z" fill="#111"/>',
    sdia: '<path d="M12 5l6 5-6 6-5-6z" fill="#fff" stroke="#22b"/><path d="M7 10H1l3-3M1 10l3 3M11 5l3-4h-4M11 16l4 4" stroke="#222" stroke-width="1.200"/>',
    sgrid: '<path d="M4 4h14M4 10h15M10 0v16M16 0v16" stroke="#22b" stroke-dasharray="4 1"/><circle cx="3" cy="4" r="2" fill="#fff" stroke="#111"/><circle cx="3" cy="10" r="2" fill="#fff" stroke="#111"/><circle cx="10" cy="17" r="2" fill="#fff" stroke="#111"/><circle cx="16" cy="17" r="2" fill="#fff" stroke="#111"/>',
    stri: '<path d="M2 2v16h16z" stroke="#222" stroke-width="1.200"/><path d="M6 10v5h5z" stroke="#222"/><path d="M3 18h14" stroke="#22b" stroke-dasharray="1 1" stroke-width="2"/><path d="M17 1l3 2-3 2z" fill="#111"/>',
    sx: '<path d="M1 6l14 13M4 16L17 3" stroke="#999"/><path d="M5 2l11 10M3 16L18 2" stroke="#333"/><path d="M8 13l3-3 2 3" stroke="#999"/><path d="M17 1l3 2-3 2z" fill="#111"/>',
    sdim: '<path d="M2 12L14 2" stroke="#222"/><path d="M1 13l1-4 3 3zM12 2l4-1-1 4z" fill="#111"/><text x="8" y="19" font-size="14" font-family="Liberation Serif" font-weight="bold" fill="#111" stroke="none">A</text>',
    sslab: '<path d="M1 16l5-3h12l-5 3zM1 11l7-6h11l-6 6zM9 4v13l8-5" stroke="#222" stroke-width="1.200"/><path d="M3 11l6-4" stroke="#2a2"/>',
    srot: '<path d="M5 5c3-4 7-4 10 0M17 8c1 4 0 6-3 8M8 18c-3 0-5-2-5-5" stroke="#222" stroke-width="1.400"/><path d="M13 6h4V2zM2 8l3-5 2 3z" fill="#111"/><path d="M10 1v5" stroke="#22b" stroke-width="1.500"/><text x="0" y="17" font-size="8" fill="#22b" stroke="none">3</text><text x="13" y="17" font-size="8" fill="#22b" stroke="none">2</text>',
    sfr: '<path d="M2 17V8l6-4h10v8" stroke="#777"/><path d="M6 15V8h7v8M6 8l3-2h8v7" stroke="#111" stroke-width="1.800"/><path d="M1 13l4-4h6" stroke="#555"/>',
    spoly: '<path d="M3 4v7h6v4h8V8" stroke="#222" stroke-width="1.500"/><path d="M1 6l2-4 2 4zM15 9l2-4 2 4z" fill="#222" stroke="none"/>',
    sbar: '<path d="M0 10h20" stroke="#888" stroke-width="1.500"/><path d="M4 12l2 2M13 12l2 2" stroke="#999"/>',
    flash: '<path d="M4 17l-1-4 8-7 5-5 3 3-4 5-8 8z" fill="#bbb" stroke="#333"/><path d="M6 11l4 4M9 9l3 3M13 4l4 4" stroke="#333"/>',
    glasses: '<circle cx="5" cy="14" r="3.800" fill="#fff" stroke="#111" stroke-width="1.400"/><circle cx="15" cy="14" r="3.800" fill="#fff" stroke="#111" stroke-width="1.400"/><path d="M2 11l4-8M18 11l-4-8M8 13h4M8 3v4M12 3v4" stroke="#111"/>',
    zi: '<circle cx="8" cy="8" r="6" stroke="#222" stroke-width="1.700"/><path d="M5 8h6M8 5v6" stroke="#222" stroke-width="1.500"/><path d="M13 13l6 6" stroke="#222" stroke-width="3"/>',
    zo: '<circle cx="8" cy="8" r="6" stroke="#222" stroke-width="1.700"/><path d="M5 8h6" stroke="#222" stroke-width="1.500"/><path d="M13 13l6 6" stroke="#222" stroke-width="3"/>',
    fit: '<path d="M2 7V2h5M2 2l5 5M18 7V2h-5M18 2l-5 5M2 13v5h5M2 18l5-5M18 13v5h-5M18 18l-5-5" stroke="#222" stroke-width="1.700"/>',
    pan: '<path d="M10 2v16M2 10h16" stroke="#222" stroke-width="1.700"/><path d="M7 4l3-4 3 4zM7 16l3 4 3-4zM4 7l-4 3 4 3zM16 7l4 3-4 3z" fill="#222" stroke="none"/>',
    orb: '<path d="M16 6C11 3 4 5 4 10s7 6 11 3" stroke="#223" stroke-width="1.800"/><path d="M10 10h7v6z" fill="#223" stroke="none"/>',
    zp: '<circle cx="12" cy="8" r="5" stroke="#aaa" stroke-width="1.500"/><path d="M0 10h7M3 7l-3 3 3 3M15 12l4 5" stroke="#aaa" stroke-width="1.700"/>',
    zn: '<circle cx="7" cy="8" r="5" stroke="#aaa" stroke-width="1.500"/><path d="M11 10h8M16 7l3 3-3 3M10 12l4 5" stroke="#aaa" stroke-width="1.700"/>',
    lt: '<path d="M12 5l-5 5 5 5" stroke="#333" stroke-width="3"/>',
    gt: '<path d="M8 5l5 5-5 5" stroke="#333" stroke-width="2.500"/>',
    up: '<path d="M5 13l5-5 5 5" stroke="#444" stroke-width="2.500"/>',
    dn: '<path d="M5 8l5 5 5-5" stroke="#444" stroke-width="2.500"/>',
    // orbit palette
    o1: '<path d="M15 12c4-6-12-9-13-2 0 4 7 6 12 3" stroke="#222" stroke-width="1.300"/><path d="M11 10h6l-2 5z" fill="#222" stroke="none"/>',
    o2: '<path d="M10 1v9M3 18l5-4h10" stroke="#22b" stroke-width="1.300"/><path d="M16 6c0 4-14 5-15 1 0-2 4-3 7-3" stroke="#222" stroke-width="1.400"/><path d="M13 5l5-3v6z" fill="#222"/>',
    o3: '<path d="M10 1v17" stroke="#22b" stroke-width="1.300"/><path d="M16 9c0-5-14-5-14 0 0 4 8 5 12 3" stroke="#222" stroke-width="1.400"/><path d="M12 9h6l-2 6z" fill="#222"/>',
    o4: '<path d="M1 10h18" stroke="#22b" stroke-width="1.300"/><path d="M12 5c0 6 0 12-3 12-4 0-5-14 2-14" stroke="#222" stroke-width="1.400"/><path d="M9 5h7l-3-5z" fill="#222"/>',
    o5: '<circle cx="10" cy="10" r="7.500" stroke="#222" stroke-width="1.400"/><circle cx="10" cy="10" r="1" fill="#22b" stroke="#22b"/><path d="M13 3l6 0-2 6z" fill="#222"/>',
    o6: '<path d="M4 5l6-3 6 3v10l-6 3-6-3z" fill="#ccc" stroke="#555"/><path d="M4 5l6 3 6-3M10 8v10" stroke="#555"/><path d="M3 8c-3 3 3 5 7 5s10-2 7-5" stroke="#22b" stroke-width="1.500"/>',
    o7: '<path d="M3 7c0-5 5-6 8-4M8 16c4 3 8 1 9-3" stroke="#22b" stroke-width="1.600"/><path d="M1 6h5l-2 4zM15 13l3-3 1 5z" fill="#22b" stroke="none"/><path d="M8 7l5 6M13 7l-5 6" stroke="#d22" stroke-width="2"/>',
    o8: '<circle cx="10" cy="10" r="8" stroke="#ccc" stroke-dasharray="2 2"/><path d="M7.500 7.500l5 5M12.500 7.500l-5 5" stroke="#b33" stroke-width="1.300"/>',
    // status bar
    q1: '<rect width="20" height="20" fill="#ff0" stroke="none"/><path d="M2 3l16 14M18 3L2 17" stroke="#222" stroke-width="1.500"/><circle cx="10" cy="10" r="2" fill="#111"/>',
    q2: '<rect width="20" height="20" fill="#ff0" stroke="none"/><path d="M8 0v20M15 0v20M0 6h20M0 14h20" stroke="#886a00"/><path d="M4 3v11l8-5z" fill="#fff" stroke="#111"/>',
    q3: '<path d="M3 1h14v18H3zM3 5h14M3 9h14M3 13h14M3 16h14" stroke="#aaa" stroke-width="1.400"/>',
    q4: '<path d="M2 16V9h6v8M5 13V5h7v8M9 10V3h8v9" stroke="#222" stroke-width="1.800"/>',
    q5: '<path d="M2 16V9h6v8" stroke="#e0e" stroke-width="2.500"/><path d="M5 13V6h7v8" stroke="#e0e" stroke-width="2"/><path d="M9 12V3h8v9M12 15V7h7" stroke="#111" stroke-width="2"/>',
    q6: '<path d="M3 3h15v14H3z" stroke="#aaa" stroke-dasharray="3 1.500" stroke-width="1.500"/><path d="M11 5h5v5h-5z" stroke="#999" stroke-width="1.500"/>',
    q7: '<path d="M13 5l6 5-6 6-5-6z" fill="#fff" stroke="#22b" stroke-width="1.300"/><path d="M8 10H1M4 7l-3 3 3 3M12 5l4-4M12 16l5 3" stroke="#111" stroke-width="1.800"/>',
    q8: '<path d="M2 6v4h7v5h9V8" stroke="#aaa" stroke-width="1.700"/>',
    q9: '<rect width="20" height="20" fill="#ff0" stroke="none"/><path d="M3 3h14v14H3zM6.500 3v14M10 3v14M13.500 3v14M3 6.500h14M3 10h14M3 13.500h14" stroke="#111" stroke-width="1.400"/>',
    q10: '<path d="M6 2v15M14 2v15M3 13l3 4 3-4M11 13l3 4 3-4" stroke="#aaa" stroke-width="1.600"/>',
    q11: '<rect width="20" height="20" fill="#fff" stroke="none"/><path d="M6 18V2M3 6l3-4 3 4M3 11l3-3 3 3" stroke="#d22" stroke-width="1.700"/><path d="M15 2v11" stroke="#223" stroke-width="1.500"/><circle cx="15" cy="15" r="3" stroke="#223" stroke-width="1.500"/>',
    q12: '<path d="M5 13V1" stroke="#2a2" stroke-width="1.800"/><path d="M5 13h14" stroke="#c33" stroke-width="1.800"/><path d="M5 13l-5 6" stroke="#22b" stroke-width="1.800"/>',
    q13: '<text x="1" y="17" font-size="15" font-weight="bold" fill="#222" stroke="none">1</text><text x="11" y="11" font-size="11" font-weight="bold" fill="#222" stroke="none">2</text>',
    q14: '<path d="M3 3h14v14H3zM3 17L17 3M10 3v5M3 10h5" stroke="#bbb" stroke-width="1.400" stroke-dasharray="3 1.500"/>'
  };

  const T = (rows) => rows.map((r) => ['t', ...r]);
  const I = (rows) => rows.map((r) => ['i', ...r]);

  const ghMenu = place(T([['File', 11.3, 16], ['Edit', 44.4, 17.5], ['View', 78.5, 22], ['Display', 118, 33.5], ['Solution', 168.4, 38], ['Help', 224.4, 21.5], ['Getting started', 1054.6, 68.5]]), 0);
  const ghTabs = place(T([['Params', 7.3, 32.7], ['Maths', 56.7, 25.8], ['Sets', 98, 19], ['Vector', 132.7, 28], ['Curve', 175, 26.5], ['Surface', 216.4, 33.5], ['Mesh', 265.8, 23.6], ['Intersect', 303.6, 38.5], ['Transform', 358, 45], ['Display', 417.5, 33], ['Kangaroo2', 465, 46.6]]), 0);
  const ghCtl = place(I([['min', 1031], ['max', 1071], ['close', 1111.6]]), 148.5);
  const ghTools = place([['i', 'folder', 13.5, 19], ['i', 'floppy', 40.5, 20], ['i', 'sep', 58, 18, 'pale']], 0);
  const ghTools2 = place(I([['focus', 197], ['dd', 215.5], ['eye', 234.5], ['dd', 252.5], ['brush', 270.5, 21], ['dome', 964.7, 21], ['wirec', 990, 21], ['redc', 1016.5, 23, 'sel'], ['sep', 1036, 20, 'pale'], ['greenc', 1055, 21], ['half', 1080], ['sep', 1095, 20, 'pale'], ['gem', 1110, 18], ['dd', 1124.5]]), 182);

  const rMenu = place(T([['File', 1134.7, 15.5], ['Edit', 1162.7, 17.5], ['View', 1192.5, 22], ['Curve', 1227.5, 27], ['Surface', 1267, 34.5], ['Solid', 1314, 23], ['Mesh', 1349.6, 25], ['Dimension', 1387.8, 50], ['Transform', 1450.7, 47.3], ['Tools', 1511, 24.4], ['Analyze', 1548, 36], ['Render', 1597, 32.4], ['Panels', 1641.6, 30], ['Help', 1684.5, 22]]), 1133);
  const rTitle = place([['i', 'rlogo', 1142, 14], ['t', 'Rhinoceros 6 Evaluation (18 Days Remaining) - [Top]', 1153.6, 243.5], ['i', 'min', 2159], ['i', 'max', 2198.7], ['i', 'close', 2239.5]], 1133);
  const rTabs = cellsOf([['Standard', 1143, 41.5, 1194.7, 'on'], ['CPlanes', 1204, 36, 1250.7], ['Set View', 1259.8, 38.6, 1308], ['Display', 1316.5, 33.5, 1360.5], ['Select', 1368.5, 28, 1407], ['Viewport Layout', 1415.8, 76.4, 1502], ['Visibility', 1509.6, 39.3, 1560], ['Transform', 1568, 47, 1626], ['Curve Tools', 1634.4, 54.5, 1699], ['Surface Tools', 1708.2, 62, 1780], ['Solid Tools', 1788.7, 50, 1848.5], ['Mesh Tools', 1857, 53, 1920.5], ['Render Tools', 1929, 60, 2000], ['Drafting', 2008.6, 37.5, 2056], ['New in V6', 2064.4, 47.3, 2121.5]], 1133);
  const rTools = place(I('new open rsave print props cut copy paste undo hand rot zoom zwin zext zsel zundo view4 car cpl circ objs bulb lock layers color ball ball2 blue spot gear dim rh help'.split(' ').map((n, i) => [n, 1145.6 + 24.83 * i, 20])), 1133);
  const rSide = 'arrow point poly cv circle ell arc rect polyg fillet surf loft box boolu proj mesh puzzle explode trim split group ungroup edp edc text scale align copyr solid ext array hist shear check rend pyr'.split(' ');
  const rVTabs = cellsOf([['Top', 1218, 17.5, 1239.5, 'on'], ['Top', 1249.6, 18, 1271], ['Front', 1280, 25, 1309], ['Right', 1318, 25, 1348]], 1209);
  const osnap = [['End', 1136, 1150, 17, 'ck'], ['Near', 1174, 1188, 21.5], ['Point', 1216.5, 1230.7, 24.7], ['Mid', 1261.3, 1275.8, 18.5], ['Cen', 1300.5, 1314.7, 18], ['Int', 1339.8, 1354, 12], ['Perp', 1372.5, 1386.7, 21], ['Tan', 1414, 1429, 16], ['Quad', 1452.5, 1466, 25.5], ['Knot', 1498.4, 1512.5, 22], ['Vertex', 1541, 1555, 27.5], ['Project', 1590, 1603.5, 33, 'off'], ['Disable', 1650, 1664, 33, 'off']]
    .map(([t, bx, x, w, c = ''], i, a) => ({ t, w, c, g: bx - (i ? a[i - 1][2] + a[i - 1][3] : 1133), in: x - bx - 12 }));
  const rStatus = cellsOf([['CPlane', 1133.6, 32.4, 1171.6], ['x 1.92', 1197.3, 26, 1249.3], ['y -0.30', 1273, 31, 1327.5], ['z 0.00', 1353.3, 26.5, 1405.3], ['Meters', 1429.3, 32, 1483], ['Default', 1501, 34, 1632.5, 'layer'], ['Grid Snap', 1639.5, 44.7, 1690], ['Ortho', 1696.6, 27, 1729.7], ['Planar', 1736.2, 29.5, 1771], ['Osnap', 1778, 30, 1813.8, 'act'], ['SmartTrack', 1819, 57, 1879, 'act'], ['Gumball', 1886.7, 39.3, 1931.8], ['Record History', 1938.4, 69, 2013.4], ['Filter', 2020.3, 22.6, 2048.7], ['Absolute tolerance: 0.01', 2050.2, 111, 2236.6]], 1133);

  const aTitle = place([['i', 'x4', 1142, 14], ['t', 'AxisVM (64) X4 R3 - C:\\Users\\kitti\\Downloads\\Model.axs', 1153.6, 262], ['i', 'min', 2159], ['i', 'max', 2198.7], ['i', 'close', 2239.5]], 1129);
  const aMenu = place(T([['File', 1134.4, 15.3], ['Edit', 1162.4, 17.5], ['Settings', 1192, 37], ['View', 1242, 22], ['Window', 1276.5, 39], ['Help', 1328, 21.5]]), 1129);
  const aBar1 = place(I([['new', 1144.5], ['aopen', 1176, 19], ['asave', 1208, 18], ['aprint', 1240, 21], ['sep', 1258], ['pdf', 1277], ['aundo', 1309.6, 17], ['dd', 1330], ['aredo', 1351.5, 17], ['ddg', 1374]]), 1129);
  const aBar2 = place(I([['stack', 1141], ['lvl', 1166.4, 20], ['sep', 1182.7], ['table', 1199, 19], ['book', 1225, 19], ['sep', 1240.5], ['disk3', 1261, 21], ['dd', 1279.5], ['wcam', 1299, 21]]), 1129);
  const aTabs = cellsOf([['Geometry', 1390.4, 45.5, 1441], ['Elements', 1447, 42, 1495.5, 'on'], ['Loads', 1502, 27.3, 1537], ['Mesh', 1545.6, 24.7, 1580], ['Static', 1587.5, 26, 1621.6], ['Buckling', 1627.5, 40.4, 1673], ['Vibration', 1679, 42, 1726.4], ['Dynamic', 1732, 41, 1778], ['R. C. Design', 1784.3, 55.4, 1844.8], ['Steel design', 1850.6, 55.7, 1911.4], ['Timber design', 1917.6, 66.3, 1989.7]], 1384.5);
  const aTools = place(I([['tno', 1398.4], ['tib', 1424], ['sep', 1440], ...'pen1 pen2 dom domh domg domk domj axr supp lsup slab wall frame link spring gap rigid nodes3 rotn'.split(' ').map((n, i) => [n, 1462.4 + 25.7 * i]), ['sep', 1940.5], ['ux', 1963], ['ua', 1989.7], ['ul', 2015], ['ut', 2041.4], ['ub', 2066.5], ['sep', 2081.5], ['house', 2104.4]]), 1384.5);
  const aSide = 'sarrow szoom saxes scube spal smir sdia sgrid stri sx sdim sslab srot sfr spoly'.split(' ');
  const aNav = place(I([['zi', 1165.7, 11], ['zo', 1182.7, 11], ['fit', 1200, 11], ['pan', 1216.7, 11], ['orb', 1234.3, 14, 'navon'], ['zp', 1250.3, 11], ['zn', 1267, 11], ['lt', 1282, 10]]), 1157);
  const aOrb = place(I([['o1', 1640, 19, 'wh'], ['o2', 1660, 15], ['o3', 1680.7, 15], ['o4', 1701, 15], ['o5', 1721.7, 15], ['o6', 1741.7, 15], ['o7', 1762.3, 15], ['sep', 1775, 16], ['o8', 1789.3, 19, 'wh']]), 1629);
  const aStat = place(I([['q1', 2012, 16], ['q2', 2030.7, 16], ['q3', 2048, 13], ['q4', 2065.7, 14], ['q5', 2083, 14], ['q6', 2101.7, 14], ['q7', 2118, 14], ['q8', 2136.7, 14], ['q9', 2154, 14, 'hl'], ['q10', 2171.7, 13], ['q11', 2190, 16], ['q12', 2206.7, 13], ['q13', 2223, 14], ['q14', 2242.7, 13]]), 1993);

  const panels = [
    { t: 'beam 1', x: 116, w: 271.5, y: 609, p: 632.7, tx: 210.6, tw: 66 },
    { t: 'S 235', x: 113.5, w: 265.5, y: 663.7, p: 687.5, tx: 211.5, tw: 55 },
    { t: 'IPE 200', x: 113.5, w: 272.2, y: 724.3, p: 748.7, tx: 204, tw: 77 },
    { t: 'beam', x: 110, w: 272.5, y: 789, p: 813, tx: 216.7, tw: 44.5 }
  ];
  const inputs = [['L', 617.8, 7.5], ['Name', 652, 47.3], ['Mat', 685.8, 31], ['CS', 720, 20.8], ['Type', 753.7, 38]];
  const wire = (a, b, c, d) => `M${a} ${b}C${(a + c) / 2} ${b} ${(a + c) / 2} ${d} ${c} ${d}`;
  const hLines = Array.from({ length: 12 }, (_, i) => 262.5 + 84.95 * i);
  const vLines = [5, 260, 514.5, 769.5, 1024];
  const zig = (x1, y, x2) => `M${x1 + 5} ${y}H${x2 - 6.5}l6.500 7-6.500 7 6.500 6.800-6.500 7 6.500 6.800-6.500 7 6.500 7H${x1 + 5}q-5 0-5-5V${y + 5}q0-5 5-5z`;
  const coordA = [['dX[m] :', 40, '-0.416', 33], ['dY[m] :', 40, '0.380', 29], ['dZ[m] :', 40, '0', 6], ['dL[m] :', 37, '0.563', 29]];
  const coordB = [['d r[m] :', 40, '0.563', 29], ['d  a[°] :', 40, '137.61', 35], ['dh[m] :', 40, '0', 6]];
</script>

{#snippet txt(s, w)}<span class="slot" style:width="{w}px"><span class="fit" use:fit={w}>{s}</span></span>{/snippet}

{#snippet icon(n, s = 20)}<svg class="ic" width={s} height={s} viewBox="0 0 20 20" fill="none" stroke="currentColor">{@html icons[n]}</svg>{/snippet}

{#snippet strip(items)}
  {#each items as it}
    <span class="item {it.c}" style:margin-left="{it.g}px">
      {#if it.k === 't'}{@render txt(it.v, it.w)}{:else}{@render icon(it.v, it.w)}{/if}
    </span>
  {/each}
{/snippet}

{#snippet cells(items)}
  {#each items as c}
    <div class="cell {c.c}" style:width="{c.width}px" style:padding-left="{c.pad}px">{@render txt(c.t, c.w)}</div>
  {/each}
{/snippet}

<div class="desktop">
  <section class="win gh">
    <header class="title">{@render txt('Grasshopper - Getting started*', 141)}{@render strip(ghCtl)}</header>
    <nav class="menu">{@render strip(ghMenu)}</nav>
    <div class="tabs">{@render strip(ghTabs)}<div class="active">{@render txt('AxisVM', 34)}</div></div>
    <div class="ribbon">
      <div class="group">
        <div class="gicons">
          {@render icon('hex', 21)}<i></i>{@render icon('ibeam', 21)}<i></i>
          <div class="col">{@render icon('axl', 21)}{@render icon('axi', 21)}</div>
        </div>
        <div class="gname">{@render txt('AxisVM', 31)}<b>+</b></div>
      </div>
    </div>
    <div class="bar">
      {@render strip(ghTools)}
      <div class="combo">{@render txt('192%', 25)}<svg width="10" height="8" fill="none" stroke="#555"><path d="M1 2l4 4 4-4" /></svg></div>
      {@render strip(ghTools2)}
    </div>
    <svg class="canvas" width="1131" height="1042" viewBox="0 178 1131 1042">
      <defs>
        <linearGradient id="nodeFill" x2="0" y2="1"><stop offset="0" stop-color="#f5f5f5" /><stop offset=".09" stop-color="#e9e9e9" /><stop offset=".1" stop-color="#dedede" /><stop offset="1" stop-color="#c6c6c6" /></linearGradient>
        <linearGradient id="greenFill" x2="0" y2="1"><stop offset="0" stop-color="#c4e8a8" /><stop offset=".27" stop-color="#86cb55" /><stop offset=".29" stop-color="#58b41c" /><stop offset="1" stop-color="#48a00c" /></linearGradient>
        <linearGradient id="wireFill" gradientUnits="userSpaceOnUse" x1="633" x2="730"><stop offset="0" stop-color="#93a377" /><stop offset="1" stop-color="#6cb32c" /></linearGradient>
      </defs>
      <g stroke="#bab8b1" stroke-width="1.300">
        {#each hLines as y}<path d="M0 {y}H1131" />{/each}
        {#each vLines as x}<path d="M{x} 178V1220" />{/each}
      </g>
      <path d="M0 179H1131" stroke="#a5a196" stroke-width="2.500" />
      <g fill="#fff" stroke="#000" stroke-width="3">
        <circle cx="6" cy="363" r="6" /><circle cx="224.500" cy="363" r="6" />
        {#each panels as p}<circle cx={p.x - 0.5} cy={p.p} r="6" /><circle cx={p.x + p.w + 0.5} cy={p.p} r="6" />{/each}
        <circle cx="626" cy="686" r="6" /><circle cx="738" cy="688" r="6" />
      </g>
      <rect x="-20" y="325" width="25" height="76" rx="4" fill="url(#nodeFill)" stroke="#333" stroke-width="1.500" />
      {#each panels as p}
        <rect x={p.x} y={p.y} width={p.w} height="48" rx="5" fill="#fff252" stroke="#222" stroke-width="1.600" />
        <rect x={p.x + 1.5} y={p.y + 1.5} width={p.w - 3} height="45" rx="4" fill="none" stroke="#fff9ae" />
        <text class="mono" x={p.tx} y={p.p + 3.5} textLength={p.tw} lengthAdjust="spacingAndGlyphs">{p.t}</text>
      {/each}
      <g fill="none" stroke="#57554c" stroke-width="4.600">
        <path d="M13 363.500H218" />
        <path d={wire(13, 363, 430, 617.5)} />
        <path d={wire(395, 632.7, 430, 652)} /><path d={wire(386, 687.5, 430, 685.8)} />
        <path d={wire(392, 748.7, 430, 720)} /><path d={wire(389, 813, 430, 753.7)} />
      </g>
      <path d="M632 685.800L732 688" fill="none" stroke="url(#wireFill)" stroke-width="4.600" />
      <g fill="#fff" stroke="#000" stroke-width="3">{#each inputs as [, y]}<circle cx="434.700" cy={y} r="6" />{/each}</g>
      <path d={zig(224.5, 339, 304.5)} fill="url(#nodeFill)" stroke="#333" stroke-width="1.500" />
      <rect x="434.700" y="597" width="190.600" height="177" rx="5" fill="url(#nodeFill)" stroke="#333" stroke-width="1.600" />
      <path d={zig(738.5, 663.5, 900.5)} fill="url(#greenFill)" stroke="#0c2a04" stroke-width="1.700" />
      <g class="nl">
        <text x="236" y="369" textLength="8" lengthAdjust="spacingAndGlyphs">L</text>
        {#each inputs as [t, y, w]}<text x={495.3 - w} y={y + 5.6} textLength={w} lengthAdjust="spacingAndGlyphs">{t}</text>{/each}
        <text x="553" y="691.500" textLength="52.500" lengthAdjust="spacingAndGlyphs">Memb</text>
        <text x="750" y="693" textLength="90" lengthAdjust="spacingAndGlyphs">AxMember</text>
      </g>
      <svg x="253" y="343.500" width="40" height="39" viewBox="0 0 20 20" preserveAspectRatio="none" fill="none">{@html icons.axl}</svg>
      <svg x="848.500" y="667.500" width="39.500" height="39.500" viewBox="0 0 20 20" fill="none">{@html icons.axi}</svg>
      <svg x="504" y="665.500" width="40.500" height="39.500" viewBox="0 0 20 20" preserveAspectRatio="none" fill="none">{@html icons.ibeam}</svg>
      <g><rect x="1" y="1194" width="26" height="24" fill="#fff" stroke="#aaa" /><path d="M11 1201h6M14 1201v11M11 1212h6" stroke="#aee6fb" stroke-width="1.600" />
        <rect x="27" y="1195" width="30" height="23" rx="3" fill="#d9d5cc" stroke="#999" /><path d="M29 1197h22v18H29z" fill="#f5a81c" stroke="#a56a08" /><path d="M32 1212c1-7 6-11 14-13l-2 6-6 8M38 1208l6 4" stroke="#46340c" stroke-width="2" fill="none" /></g>
      <path d="M1084 1180l9-4 2 8-6 2z" fill="#222" /><circle cx="1104.500" cy="1193" r="17" fill="#f3f2ee" stroke="#8c8a84" stroke-width="1.500" /><circle cx="1104.500" cy="1193" r="12.500" fill="#e2e0da" stroke="#b8b6b0" />
      <path d="M1104.500 1177l3 4h-6zM1104.500 1209l3-4h-6zM1088 1193l4-3v6zM1121 1193l-4-3v6z" fill="#999" />
    </svg>
    <footer class="status"><svg width="16" height="16" viewBox="0 0 20 20"><circle cx="10" cy="10" r="9" fill="#1d6fc4" /><path d="M5 9l5-5 5 5-5 7z" fill="#bfe0ff" /></svg>{@render txt('Autosave complete (41 seconds ago)', 172)}<span class="ver">{@render txt('1.0.0005', 37)}</span></footer>
  </section>

  <section class="win rhino">
    <header class="title">{@render strip(rTitle)}</header>
    <nav class="menu">{@render strip(rMenu)}</nav>
    <div class="cmd">
      <div class="hist"><div>{@render txt('Point location ( Type=Coordinate )', 163)}</div></div>
      <div class="prompt">{@render txt('Command:', 52)}<svg width="12" height="15"><path d="M.5.500h11v14H.5zM.5 7.500h11" fill="#eee" stroke="#aaa" /><path d="M3 6h6L6 3zM3 9.500h6l-3 3z" fill="#222" /></svg></div>
    </div>
    <div class="rtabs">{@render cells(rTabs)}<span class="cog">{@render icon('cog', 13)}</span></div>
    <div class="rtools">{@render strip(rTools)}</div>
    <div class="rbody">
      <div class="palette">{#each rSide as n}<span>{@render icon(n, 20)}</span>{/each}</div>
      <div class="viewport">
        <div class="vlabel">{@render txt('Top', 19)}<i></i>{@render icon('ddl', 10)}</div>
        <svg width="1048" height="398" viewBox="1210 149 1048 398" fill="none">
          <path d="M1503 243V467" stroke="#b9837c" stroke-width="1.500" />
          {#each [242.5, 467] as y}<path d="M1500 {y - 3}l6 6m0-6l-6 6" stroke="#a3130c" stroke-width="3.200" />{/each}
          <path d="M1242 490v26h27" stroke="#999" stroke-width="1.400" />
          <text x="1244" y="490" font-size="11" fill="#666">y</text><text x="1271" y="517.500" font-size="11" fill="#666">x</text>
        </svg>
      </div>
    </div>
    <div class="vtabs">{@render cells(rVTabs)}<div class="cell plus"><svg width="9" height="9" viewBox="0 0 9 9"><path d="M3.500.500h2v3h3v2h-3v3h-2v-3h-3v-2h3z" fill="#fff" stroke="#777" /></svg></div></div>
    <div class="osnap">
      {#each osnap as o}
        <span class="chk {o.c}" style:margin-left="{o.g}px">{#if o.c === 'ck'}<svg width="10" height="10"><path d="M1.500 5l2.500 3L8.500 2" fill="none" stroke="#222" /></svg>{/if}</span>
        <span style:margin-left="{o.in}px">{@render txt(o.t, o.w)}</span>
      {/each}
    </div>
    <footer class="rstatus">{@render cells(rStatus)}</footer>
  </section>

  <section class="win axis">
    <header class="title">{@render strip(aTitle)}</header>
    <nav class="menu">{@render strip(aMenu)}</nav>
    <div class="atop">
      <div class="aleft"><div class="r1">{@render strip(aBar1)}</div><div class="r2">{@render strip(aBar2)}</div></div>
      <div class="aright">
        <div class="atabs">{@render cells(aTabs)}</div>
        <div class="atools">{@render strip(aTools)}<span class="blank"></span></div>
      </div>
    </div>
    <div class="abody">
      <div class="aside">
        {#each aSide as n}<span>{@render icon(n, 20)}</span>{/each}
        <span class="s2">{@render icon('sbar', 19)}</span><span class="s3">{@render icon('flash', 17)}</span><span class="s4">{@render icon('glasses', 19)}</span>
      </div>
      <div class="amain">
        <svg class="scene" width="1086" height="480" viewBox="1157 722 1086 480" fill="none">
          <defs><linearGradient id="web" gradientUnits="userSpaceOnUse" x1="626" y1="380" x2="555" y2="531"><stop offset="0" stop-color="#a92c48" /><stop offset=".55" stop-color="#b3304d" /><stop offset=".63" stop-color="#ba3250" /><stop offset=".7" stop-color="#d0395b" /><stop offset=".78" stop-color="#c03453" /><stop offset="1" stop-color="#b02e4b" /></linearGradient></defs>
          <g stroke-width="1">
            <path d="M1157 749L2122 1202M2168 723L1551 1202" stroke="#f1e0b4" />
            <path d="M1157 1102L1648 723M1157 1063l296 139M1771 723l472 222M2243 1068l-168 134" stroke="#d8d8d8" />
          </g>
          <g transform="translate(1400 820) scale(.33333)" stroke="#3a1238" stroke-width="4" stroke-linejoin="round">
            <path d="M1100 690l35 16v8l-75 56v-20z" fill="#a62b47" />
            <path d="M152 140V285q0 12-12 20L116 322v8L1060 770l38-38V550z" fill="url(#web)" />
            <path d="M116 320L1060 762" stroke-width="2.500" />
            <path d="M1100 552V728l-40 34" stroke-width="5" />
            <path d="M116 133v8L1060 584l75-56v-8z" fill="#8d2543" stroke-width="3" />
            <path d="M192 73l943 447-75 57L116 132z" fill="#a92d49" stroke-width="3.500" />
            <g stroke="#80705a" stroke-width="8"><path d="M540 356c-45 35-50 90-8 128M514 484l27 4-5-20M712 356c45 35 48 90 8 128M738 484l-27 4 5-20" /></g>
            <path d="M626 424V380" stroke="#128c20" stroke-width="10" /><path d="M626 422l-42-20" stroke="#ffa510" stroke-width="8" /><path d="M626 422l32-23" stroke="#ff6870" stroke-width="8" />
            <path d="M1086 634l12 12-12 12" stroke="#7fae5a" stroke-width="6" /><path d="M1112 634l-12 12 12 12" stroke="#2430a8" stroke-width="6" />
            <path d="M404 762V748l-6-18q4-6 8 2v-16q4-8 6-2 4-8 8 0 5-4 7 4 6-2 5 8v22l-6 14z" fill="#fff" stroke="#222" /><path d="M412 720v20M420 718v22" stroke="#222" stroke-width="3" /><path d="M434 774c14 4 22-2 14-8" stroke="#222" /><path d="M428 770l12-6v12z" fill="#222" stroke="none" />
          </g>
          <path d="M1199.700 1190.500V1165M1199.700 1190.500l21-15M1199.700 1190.500l-25-10.500" stroke="#0e87a5" stroke-width="2.300" />
          <g class="triad"><text x="1195.500" y="1160">Z</text><text x="1222.500" y="1174">X</text><text x="1161" y="1178.500">Y</text></g>
        </svg>
        <div class="nav">{@render strip(aNav)}<span class="thumb"></span><span class="navend">{@render icon('gt', 11)}</span></div>
        <div class="pop code">
          <div class="ptitle"><span></span><b>{@render icon('closeb', 10)}</b></div>
          <div class="prow">{@render txt('Code', 25.5)}<svg width="14" height="11"><rect width="14" height="11" fill="#00189c" /><circle cx="7" cy="5.500" r="3.500" fill="none" stroke="#d8c84a" stroke-dasharray="1 1.700" /></svg><em>{@render txt('Eurocode', 46.4)}</em></div>
          <div class="prow two">{@render txt('Case', 25)}<span class="colon">:</span><em>{@render txt('ST1', 18.3)}</em></div>
        </div>
        <div class="pop orbit"><div class="grip"><b>{@render icon('closeb', 9)}</b></div><div class="ostrip">{@render strip(aOrb)}</div></div>
        <div class="pop coords">
          <div class="grip"><b>{@render icon('closeb', 10)}</b></div>
          <div class="d">d</div>
          <div class="ctab">{#each coordA as [a, aw, b, bw]}<div>{@render txt(a, aw)}<span class="val">{@render txt(b, bw)}</span></div>{/each}</div>
          <i></i>
          <div class="d">d</div>
          <div class="ctab">{#each coordB as [a, aw, b, bw]}<div>{@render txt(a, aw)}<span class="val">{@render txt(b, bw)}</span></div>{/each}</div>
        </div>
      </div>
      <div class="vscroll">{@render icon('close', 16)}{@render icon('max', 16)}{@render icon('up', 12)}<span></span><div>{@render icon('dn', 12)}</div></div>
    </div>
    <footer class="astatus"><div class="msg"></div>{@render strip(aStat)}</footer>
  </section>
</div>

<style>
  :global(body) { background: #000; overflow: hidden; }
  .desktop { position: relative; width: 2261px; height: 1243px; background: #3b3b3d; overflow: hidden; font: 12px/14px "Open Sans", "Noto Sans", sans-serif; color: #1c1c1c; }
  .win { position: absolute; display: flex; flex-direction: column; overflow: hidden; box-sizing: border-box; background: #fff; }
  .gh { left: 0; top: 1px; width: 1131px; height: 1240px; color: #222; }
  .rhino { left: 1133px; top: 1px; width: 1126px; height: 618px; background: #eceef0; }
  .axis { left: 1129px; top: 621px; width: 1130px; height: 619px; }
  .slot { display: inline-block; flex: none; white-space: pre; height: 14px; overflow: visible; }
  .fit { display: inline-block; transform-origin: 0 50%; white-space: pre; }
  .ic { display: block; flex: none; overflow: visible; }
  .item { display: flex; flex: none; align-items: center; }
  .title, .menu { display: flex; align-items: center; flex: none; background: #fff; }
  .title { height: 26px; }
  .gh .title { padding-left: 7.5px; color: #999; }
  .gh .menu { height: 25px; background: linear-gradient(90deg, #f0f0f0, #fdfdfd 70%); color: #111; }
  .tabs { display: flex; align-items: center; height: 21px; flex: none; background: #f0f0f0; color: #767676; border-bottom: 1px solid #a0a0a0; box-sizing: border-box; }
  .active { margin-left: 9.4px; width: 49px; height: 20px; box-sizing: border-box; padding: 2px 0 0 6px; align-self: flex-start; background: linear-gradient(#fff, #f0f0f0); border: 1px solid #a0a0a0; border-bottom: 0; border-radius: 6px 6px 0 0; color: #222; }
  .ribbon { height: 77px; flex: none; box-sizing: border-box; background: linear-gradient(#d8d8d8, #f2f2f2); border-bottom: 2px solid #848484; padding: 1px 3px; }
  .group { width: 96px; height: 64px; box-sizing: border-box; border: 1px solid #777; border-radius: 4px; overflow: hidden; background: linear-gradient(#dcdcdc, #f0f0f0); }
  .gicons { display: flex; gap: 5px; padding: 2px 2px 0; height: 49px; }
  .gicons i { width: 1px; height: 42px; background: #bbb; margin: 3px 1px 0 0.5px; }
  .col { display: flex; flex-direction: column; gap: 3px; }
  .gname { display: flex; align-items: center; justify-content: flex-end; gap: 28px; padding-right: 2px; height: 12px; background: #1d1d1d; color: #ddd; font-size: 10.500px; }
  .gname b { font-size: 11px; color: #bbb; line-height: 12px; }
  .bar { display: flex; align-items: center; height: 28px; flex: none; box-sizing: border-box; padding-bottom: 2px; background: linear-gradient(#fff, #f4f4f4); }
  .combo { display: flex; flex: none; align-items: center; justify-content: space-between; box-sizing: border-box; width: 120px; height: 21px; border: 1px solid #8c8c8c; padding: 0 3px; background: #fff; margin-left: -5px; }
  .pale { opacity: .6; }
  .sel { background: #fff; outline: 1.500px solid #62aede; }
  .canvas { display: block; flex: none; background: #d4d0c8; }
  .mono { font: 16.500px "Liberation Mono", monospace; fill: #3c5a1c; }
  .nl text { font: 16px "Noto Sans", "Open Sans", sans-serif; fill: #222; }
  .status { display: flex; align-items: center; flex: 1; padding-left: 2px; gap: 1px; background: #f0f0f0; border-top: 1px solid #888; }
  .ver { margin-left: auto; padding-right: 28px; color: #777; }

  .rhino .title, .rhino .menu { color: #828282; }
  .rhino .menu { height: 18px; padding-top: 1px; box-sizing: border-box; }
  .cmd { flex: none; height: 36px; box-sizing: border-box; padding-top: 3px; border-bottom: 1px solid #dfe3e8; }
  .hist { height: 10px; width: 1112px; overflow: hidden; background: #fff; border-bottom: 1px solid #ccd6da; padding-left: 2px; box-sizing: border-box; }
  .hist div { margin-top: -4px; }
  .prompt { height: 15px; background: #fff; padding-left: 2px; font-weight: bold; display: flex; justify-content: space-between; align-items: center; padding-right: 2px; }
  .rtabs { display: flex; align-items: stretch; flex: none; height: 15px; border-bottom: 1px solid #c8ced4; box-sizing: border-box; }
  .cell { box-sizing: border-box; flex: none; display: flex; align-items: center; }
  .rtabs .cell { background: #dbdcde; clip-path: polygon(9px 0, 100% 0, 100% 100%, 0 100%); border-right: 1px solid #c4c8cc; padding-top: 1px; }
  .rtabs .on { background: #f1f3f4; }
  .cog { margin: -3px 2px 0 auto; }
  .rtools { display: flex; align-items: center; flex: none; height: 28px; margin-bottom: 24px; }
  .rbody { display: flex; flex: none; height: 400px; }
  .palette { width: 76px; flex: none; display: grid; grid-template-columns: repeat(3, 25px); grid-auto-rows: 24.850px; align-content: start; justify-content: end; overflow: hidden; box-sizing: border-box; border-top: 3px solid #dfe3ea; margin-top: 3px; padding-right: 6px; }
  .palette span { display: grid; place-items: center; }
  .viewport { position: relative; width: 1050px; border: 1px solid #c3cfdc; background: #fff; box-sizing: border-box; }
  .viewport > svg { display: block; }
  .vlabel { position: absolute; left: 0; top: 0; display: flex; align-items: center; height: 16px; width: 42px; padding-left: 7px; box-sizing: border-box; background: #8ea8c6; font-weight: bold; }
  .vlabel i { width: 1px; height: 14px; background: #111; margin: 0 0 0 6px; }
  .vtabs { display: flex; height: 18px; flex: none; margin-left: 76px; }
  .vtabs .cell { background: #d9dadb; clip-path: polygon(0 0, 100% 0, 100% 100%, 7px 100%); padding-top: 3px; border-right: 1px solid #c0c6cc; }
  .vtabs .on { background: #fbfcfd; }
  .vtabs .plus { width: 24px; padding-left: 8px; background: #f6f8fa; }
  .osnap { display: flex; align-items: center; height: 31px; flex: none; margin-bottom: 4px; }
  .chk { width: 12px; height: 12px; flex: none; box-sizing: border-box; border: 1px solid #333; background: #fff; display: flex; }
  .off { border-color: #bbb; background: #e4e4e4; }
  .rstatus { display: flex; flex: 1; background: #f0f1f3; border-top: 1px solid #c6ccd6; }
  .rstatus .cell { border-right: 1px solid #c2c9d6; background: linear-gradient(#f2f3f5, #e2e3e6); }
  .rstatus .act { font-weight: bold; background: linear-gradient(#e9f6fd, #d3e8f4); }
  .rstatus .layer { background: linear-gradient(#000, #000) 3px 2px / 13px 13px no-repeat, linear-gradient(#f2f3f5, #e2e3e6); }

  .axis .menu { height: 18px; }
  .atop { display: flex; height: 57px; flex: none; background: #d8e5f2; border-bottom: 2px solid #8496a8; box-sizing: border-box; border-top: 1px solid #e8e8e8; }
  .aleft { width: 255.500px; flex: none; background: linear-gradient(#d5e3f2, #dcebf7); }
  .r1, .r2 { display: flex; align-items: center; }
  .r1 { height: 28px; }
  .r2 { height: 26px; }
  .aright { flex: 1; min-width: 0; }
  .atabs { display: flex; height: 20px; align-items: stretch; padding-top: 1px; box-sizing: border-box; border-bottom: 1px solid #f8fbff; }
  .atabs .cell { margin-top: 1px; background: #ececec; border-right: 2px solid #777; box-shadow: inset 1px 1px #fff; }
  .atabs .on { background: #d8e5f2; margin-top: 0; box-shadow: none; }
  .atools { display: flex; align-items: center; height: 34px; background: linear-gradient(#d9e7f4, #e8f5fd); border-left: 1px solid #fff; margin-left: -1px; }
  .blank { margin-left: 2px; width: 140px; height: 32px; background: #fff; }
  .abody { display: flex; height: 496px; flex: none; }
  .aside { width: 28px; flex: none; box-sizing: border-box; border-right: 2px solid #97a9b8; padding-top: 6px; background: linear-gradient(90deg, #d9e7f4, #e6f2fb 60%, #d2e0ee); display: flex; flex-direction: column; }
  .aside span { height: 27.350px; flex: none; display: grid; place-items: center; padding-right: 2px; }
  .aside .s2 { margin-top: 10px; height: 20px; }
  .aside .s3 { height: 20px; }
  .aside .s4 { margin-top: 10px; height: 18px; }
  .amain { position: relative; width: 1086px; flex: none; }
  .scene { display: block; background: #fff; }
  .triad { font: bold 12px "Open Sans", sans-serif; fill: #0e87a5; }
  .nav { display: flex; align-items: center; height: 16px; background: #f0f0f0; }
  .navon { background: #b5d8f3; height: 15px; }
  .thumb { width: 15px; height: 14px; margin-left: 3px; background: #cdcdcd; }
  .navend { margin-left: auto; padding-right: 3px; }
  .pop { position: absolute; box-sizing: border-box; background: #fff; border: 1px solid #ddd; border-right: 2px solid #777; border-bottom: 2px solid #777; }
  .pop, .d { font-family: "DejaVu Sans", sans-serif; font-size: 10.500px; }
  .code { left: 4px; top: 4px; width: 110px; height: 49px; padding: 2px 3px 0 3px; }
  .ptitle { display: flex; height: 12px; background: #97b3d5; justify-content: flex-end; }
  .pop b { display: grid; place-items: center; width: 12px; height: 12px; background: #dadada; color: #000; flex: none; }
  .prow { display: flex; align-items: center; height: 15px; padding-left: 3px; background: linear-gradient(#eaf4fc, #fff); border-bottom: 1px solid #bbb; color: #333; }
  .prow svg { margin: 0 3px 0 8px; }
  .two { border: 0; background: #fff; }
  .prow em { font-style: normal; color: #1d1d6c; display: flex; }
  .colon { width: 7px; padding-left: 7px; }
  .orbit { left: 456px; top: 453px; width: 190px; height: 27px; padding: 2px 3px; display: flex; }
  .grip { display: flex; flex-direction: column; flex: none; width: 12px; background: #97b1cf; }
  .ostrip { display: flex; align-items: center; flex: 1; background: #dbe9f5; margin-right: 2px; }
  .wh { background: #fff; }
  .coords { left: 829px; top: 419px; width: 256px; height: 61px; background: #e9e9e9; display: flex; padding: 3px 3px 2px 4px; color: #333; }
  .d { box-sizing: border-box; width: 14px; height: 50px; margin: 2px 3px 0 3.500px; border: 1px solid #3c7fb1; background: #c4e2f8; font-size: 15px; display: grid; place-items: center; color: #111; flex: none; }
  .ctab { display: flex; flex-direction: column; }
  .ctab > div { display: flex; height: 13.300px; align-items: center; }
  .ctab .val { display: block; box-sizing: border-box; width: 50px; height: 12.500px; background: #fff; margin-left: 4px; line-height: 13px; }
  .ctab > div > :global(.slot) { width: 40px !important; }
  .coords > i { width: 1px; background: #999; margin-left: 4px; }
  .coords > i + .d { margin-left: 3px; }
  .vscroll { flex: 1; display: flex; flex-direction: column; align-items: center; background: #f0f0f0; color: #777; padding-top: 2px; gap: 1px; }
  .vscroll > :global(svg:nth-child(3)) { margin-top: 5px; }
  .vscroll span { width: 14px; height: 15px; background: #cdcdcd; }
  .vscroll div { margin-top: auto; padding-bottom: 16px; }
  .astatus { display: flex; align-items: center; flex: 1; background: #d6e4f1; border-top: 2px solid #eef3f8; }
  .msg { width: 862px; height: 16px; margin: 0 1px; box-sizing: border-box; border: 1px solid #cbd8e4; }
  .hl { background: #ff0; }
</style>
